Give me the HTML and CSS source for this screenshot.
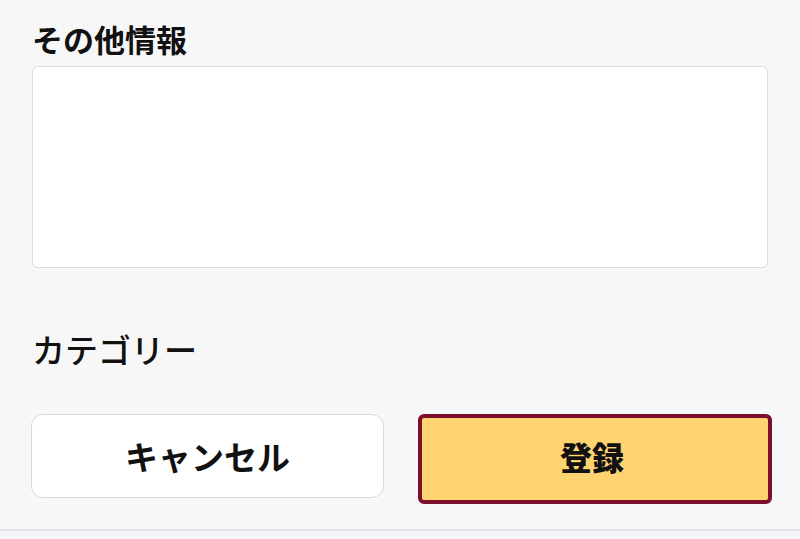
FILE: index.html
```html
<!DOCTYPE html>
<html lang="ja">
<head>
<meta charset="utf-8">
<title>その他情報</title>
<link rel="stylesheet" href="styles.css">
</head>
<body>
<main class="form">
  <h2 class="label label-strong">その他情報</h2>
  <textarea class="note"></textarea>
  <h2 class="label label-medium">カテゴリー</h2>
  <div class="actions">
    <button class="btn btn-cancel" type="button">キャンセル</button>
    <button class="btn btn-submit" type="button">登録</button>
  </div>
</main>
<footer class="bottom-bar"></footer>
</body>
</html>
```

FILE: styles.css
```css
html, body {
  margin: 0;
  padding: 0;
}
body {
  width: 800px;
  height: 539px;
  overflow: hidden;
  background: #f7f7f7;
  font-family: "Noto Sans CJK JP", "Noto Sans", sans-serif;
  color: #111;
}
.form {
  padding: 19px 32px 0 32px;
  height: 529px;
  box-sizing: border-box;
}
.label {
  margin: 0;
  font-size: 31px;
  line-height: 40px;
  color: #111;
}
.label-strong {
  font-weight: 700;
}
.label-medium {
  font-weight: 500;
  font-size: 33px;
  margin-top: 61px;
}
.note {
  display: block;
  margin-top: 7px;
  width: 736px;
  height: 202px;
  box-sizing: border-box;
  background: #fff;
  border: 1px solid #dcdcdc;
  border-radius: 6px;
  resize: none;
  padding: 0;
}
.actions {
  display: flex;
  align-items: flex-start;
  gap: 34px;
  margin-top: 45px;
  margin-left: -1px;
}
.btn {
  flex-shrink: 0;
  font-family: "Noto Sans CJK JP", "Noto Sans", sans-serif;
  font-size: 33px;
  font-weight: 700;
  color: #111;
  box-sizing: border-box;
  padding: 0;
  cursor: pointer;
}
.btn-cancel {
  width: 353px;
  height: 84px;
  background: #fff;
  border: 1px solid #d9d9d9;
  border-radius: 12px;
}
.btn-submit {
  width: 354px;
  height: 90px;
  background: #ffd36f;
  border: 4px solid #7b0f2c;
  border-radius: 6px;
  padding: 0 6px 6px 0;
  font-size: 32px;
  font-weight: 900;
}
.bottom-bar {
  height: 10px;
  border-top: 2px solid #e3e3e9;
  background: #f4f4fa;
}
```
